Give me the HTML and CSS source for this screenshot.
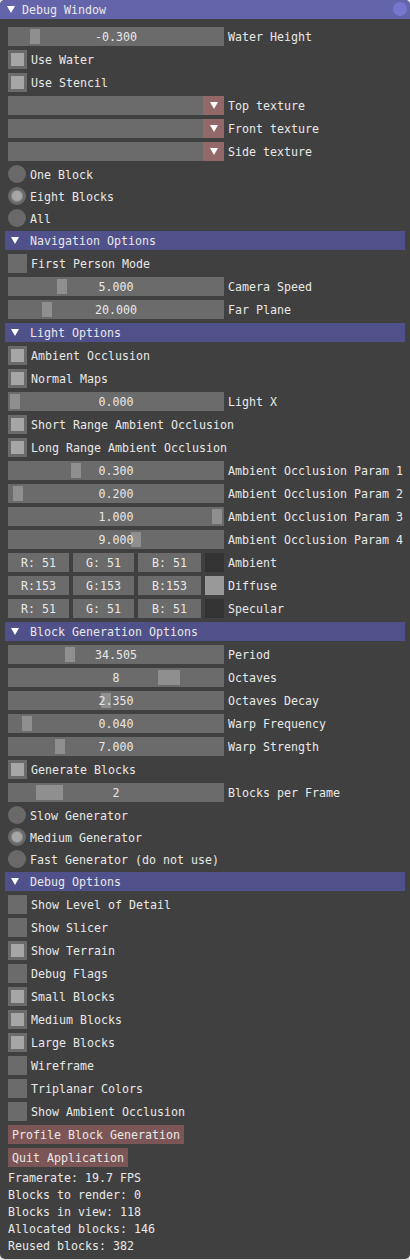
FILE: index.html
```html
<!DOCTYPE html>
<html>
<head>
<meta charset="utf-8">
<link rel="stylesheet" href="styles.css">
</head>
<body>
<div class="window">
  <div class="titlebar">
    <span class="tri"></span>
    <span class="title">Debug Window</span>
    <span class="close"></span>
  </div>
  <div class="content">
    <div class="row"><div class="slider"><span class="grab" style="left:22px"></span><span class="val">-0.300</span></div><span class="label">Water Height</span></div>
    <div class="row"><span class="check on"></span><span class="label">Use Water</span></div>
    <div class="row"><span class="check on"></span><span class="label">Use Stencil</span></div>
    <div class="row"><div class="combo"><span class="cbtn"><span class="ctri"></span></span></div><span class="label">Top texture</span></div>
    <div class="row"><div class="combo"><span class="cbtn"><span class="ctri"></span></span></div><span class="label">Front texture</span></div>
    <div class="row"><div class="combo"><span class="cbtn"><span class="ctri"></span></span></div><span class="label">Side texture</span></div>
    <div class="row rrow"><span class="radio"></span><span class="rlabel">One Block</span></div>
    <div class="row rrow"><span class="radio on"></span><span class="rlabel">Eight Blocks</span></div>
    <div class="row rrow"><span class="radio"></span><span class="rlabel">All</span></div>

    <div class="header"><span class="htri"></span><span class="htext">Navigation Options</span></div>
    <div class="row"><span class="check"></span><span class="label">First Person Mode</span></div>
    <div class="row"><div class="slider"><span class="grab" style="left:49px"></span><span class="val">5.000</span></div><span class="label">Camera Speed</span></div>
    <div class="row"><div class="slider"><span class="grab" style="left:34px"></span><span class="val">20.000</span></div><span class="label">Far Plane</span></div>

    <div class="header"><span class="htri"></span><span class="htext">Light Options</span></div>
    <div class="row"><span class="check on"></span><span class="label">Ambient Occlusion</span></div>
    <div class="row"><span class="check on"></span><span class="label">Normal Maps</span></div>
    <div class="row"><div class="slider"><span class="grab" style="left:2px"></span><span class="val">0.000</span></div><span class="label">Light X</span></div>
    <div class="row"><span class="check on"></span><span class="label">Short Range Ambient Occlusion</span></div>
    <div class="row"><span class="check on"></span><span class="label">Long Range Ambient Occlusion</span></div>
    <div class="row"><div class="slider"><span class="grab" style="left:63px"></span><span class="val">0.300</span></div><span class="label">Ambient Occlusion Param 1</span></div>
    <div class="row"><div class="slider"><span class="grab" style="left:5px"></span><span class="val">0.200</span></div><span class="label">Ambient Occlusion Param 2</span></div>
    <div class="row"><div class="slider"><span class="grab" style="left:204px"></span><span class="val">1.000</span></div><span class="label">Ambient Occlusion Param 3</span></div>
    <div class="row"><div class="slider"><span class="grab" style="left:123px"></span><span class="val">9.000</span></div><span class="label">Ambient Occlusion Param 4</span></div>
    <div class="row"><div class="color"><span class="cbox r">R: 51</span><span class="cbox g">G: 51</span><span class="cbox b">B: 51</span><span class="swatch dark"></span></div><span class="label">Ambient</span></div>
    <div class="row"><div class="color"><span class="cbox r">R:153</span><span class="cbox g">G:153</span><span class="cbox b">B:153</span><span class="swatch light"></span></div><span class="label">Diffuse</span></div>
    <div class="row"><div class="color"><span class="cbox r">R: 51</span><span class="cbox g">G: 51</span><span class="cbox b">B: 51</span><span class="swatch dark"></span></div><span class="label">Specular</span></div>

    <div class="header"><span class="htri"></span><span class="htext">Block Generation Options</span></div>
    <div class="row"><div class="slider"><span class="grab" style="left:57px"></span><span class="val">34.505</span></div><span class="label">Period</span></div>
    <div class="row"><div class="slider"><span class="grab" style="left:150px;width:22px"></span><span class="val">8</span></div><span class="label">Octaves</span></div>
    <div class="row"><div class="slider"><span class="grab" style="left:93px"></span><span class="val">2.350</span></div><span class="label">Octaves Decay</span></div>
    <div class="row"><div class="slider"><span class="grab" style="left:14px"></span><span class="val">0.040</span></div><span class="label">Warp Frequency</span></div>
    <div class="row"><div class="slider"><span class="grab" style="left:47px"></span><span class="val">7.000</span></div><span class="label">Warp Strength</span></div>
    <div class="row"><span class="check on"></span><span class="label">Generate Blocks</span></div>
    <div class="row"><div class="slider"><span class="grab" style="left:28px;width:27px"></span><span class="val">2</span></div><span class="label">Blocks per Frame</span></div>
    <div class="row rrow"><span class="radio"></span><span class="rlabel">Slow Generator</span></div>
    <div class="row rrow"><span class="radio on"></span><span class="rlabel">Medium Generator</span></div>
    <div class="row rrow"><span class="radio"></span><span class="rlabel">Fast Generator (do not use)</span></div>

    <div class="header"><span class="htri"></span><span class="htext">Debug Options</span></div>
    <div class="row"><span class="check"></span><span class="label">Show Level of Detail</span></div>
    <div class="row"><span class="check"></span><span class="label">Show Slicer</span></div>
    <div class="row"><span class="check on"></span><span class="label">Show Terrain</span></div>
    <div class="row"><span class="check"></span><span class="label">Debug Flags</span></div>
    <div class="row"><span class="check on"></span><span class="label">Small Blocks</span></div>
    <div class="row"><span class="check on"></span><span class="label">Medium Blocks</span></div>
    <div class="row"><span class="check on"></span><span class="label">Large Blocks</span></div>
    <div class="row"><span class="check"></span><span class="label">Wireframe</span></div>
    <div class="row"><span class="check"></span><span class="label">Triplanar Colors</span></div>
    <div class="row"><span class="check"></span><span class="label">Show Ambient Occlusion</span></div>
    <div class="row"><span class="button">Profile Block Generation</span></div>
    <div class="row"><span class="button">Quit Application</span></div>
    <div class="text">Framerate: 19.7 FPS</div>
    <div class="text">Blocks to render: 0</div>
    <div class="text">Blocks in view: 118</div>
    <div class="text">Allocated blocks: 146</div>
    <div class="text">Reused blocks: 382</div>
  </div>
</div>
</body>
</html>
```

FILE: styles.css
```css
html, body {
  margin: 0;
  padding: 0;
  background: #e4e4e4;
}
body {
  width: 410px;
  font-family: "DejaVu Sans Mono", "Liberation Mono", monospace;
  font-size: 11.63px;
  color: #e8e8e8;
}
.window {
  width: 410px;
  background: #404040;
  border-radius: 5px;
  overflow: hidden;
}
.titlebar {
  height: 19px;
  background: #6464aa;
  display: flex;
  align-items: flex-start;
  position: relative;
}
.tri {
  align-self: center;
  width: 0;
  height: 0;
  border-left: 4px solid transparent;
  border-right: 4px solid transparent;
  border-top: 7px solid #ffffff;
  margin-left: 7px;
}
.title {
  margin-left: 7px;
  padding-top: 1px;
  line-height: 19px;
  white-space: pre;
}
.close {
  position: absolute;
  right: 3px;
  top: 2px;
  width: 14px;
  height: 14px;
  border-radius: 50%;
  background: #7676cf;
}
.content {
  display: flex;
  flex-direction: column;
  gap: 4px;
  padding: 8px 5px 7px 5px;
}
.row {
  margin-left: 3px;
  height: 19px;
  display: flex;
  align-items: flex-start;
  gap: 4px;
  white-space: pre;
}
.rrow {
  height: 18px;
}
.label {
  padding-top: 1px;
  line-height: 19px;
}
.slider {
  position: relative;
  width: 216px;
  height: 19px;
  background: #6b6b6b;
  flex: none;
}
.grab {
  position: absolute;
  top: 2px;
  width: 10px;
  height: 15px;
  background: #8f8f8f;
}
.val {
  position: relative;
  display: block;
  text-align: center;
  padding-top: 1px;
  line-height: 19px;
}
.check {
  width: 19px;
  height: 19px;
  background: #6b6b6b;
  box-sizing: border-box;
  flex: none;
}
.check.on {
  border: 3px solid #6b6b6b;
  background: #a6a6a6;
}
.combo {
  width: 216px;
  height: 19px;
  background: #6b6b6b;
  display: flex;
  justify-content: flex-end;
  flex: none;
}
.cbtn {
  width: 21px;
  height: 19px;
  background: #936868;
  display: flex;
  align-items: center;
  justify-content: center;
}
.ctri {
  width: 0;
  height: 0;
  border-left: 4px solid transparent;
  border-right: 4px solid transparent;
  border-top: 7px solid #ffffff;
}
.radio {
  width: 18px;
  height: 18px;
  border-radius: 50%;
  background: #696969;
  box-sizing: border-box;
  flex: none;
}
.radio.on {
  border: 3px solid #696969;
  background: #a6a6a6;
  box-shadow: inset 0 0 0 1px #8a8a8a;
}
.rlabel {
  padding-top: 1px;
  line-height: 18px;
}
.header {
  height: 19px;
  background: #50508a;
  display: flex;
  align-items: flex-start;
  white-space: pre;
}
.htri {
  align-self: center;
  width: 0;
  height: 0;
  border-left: 4px solid transparent;
  border-right: 4px solid transparent;
  border-top: 7px solid #ffffff;
  margin-left: 6px;
}
.htext {
  margin-left: 11px;
  padding-top: 1px;
  line-height: 19px;
}
.color {
  display: flex;
  gap: 4px;
  width: 216px;
  flex: none;
}
.cbox {
  height: 19px;
  box-sizing: border-box;
  padding-top: 1px;
  line-height: 19px;
  background: #6b6b6b;
  text-align: center;
}
.cbox.r { width: 61px; }
.cbox.g { width: 61px; }
.cbox.b { width: 63px; }
.swatch {
  width: 19px;
  height: 19px;
}
.swatch.dark { background: #333333; }
.swatch.light { background: #999999; }
.button {
  height: 19px;
  box-sizing: border-box;
  padding: 1px 4px 0 4px;
  line-height: 19px;
  background: #7c5656;
}
.text {
  margin-left: 3px;
  height: 13px;
  box-sizing: border-box;
  padding-top: 1px;
  line-height: 13px;
  white-space: pre;
}
```
